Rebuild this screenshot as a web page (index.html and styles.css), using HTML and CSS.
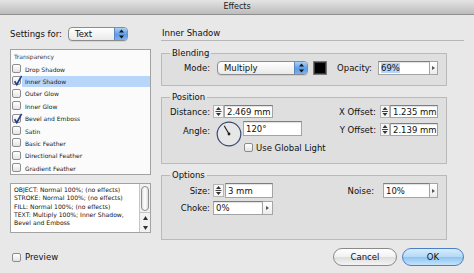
FILE: index.html
```html
<!DOCTYPE html>
<html lang="en">
<head>
	<meta charset="utf-8">
	<title>Effects</title>
	<link rel="stylesheet" href="styles.css">
</head>
<body>
<div class="dialog">
	<header class="titlebar">Effects</header>

	<div class="dialog__main">
		<aside class="sidebar">
			<div class="settings-for">
				<span class="settings-for__label">Settings for:</span>
				<div class="popup popup--target">
					<span class="popup__value">Text</span>
					<span class="popup__arrows"><svg width="7" height="10" viewBox="0 0 7 10"><path d="M3.5 0.5 6 3.6H1Z M3.5 9.5 6 6.4H1Z" fill="#111"/></svg></span>
				</div>
			</div>

			<ul class="effect-list">
				<li class="effect-list__group">Transparency</li>
				<li class="effect-list__item"><span class="check"></span><span class="effect-list__label">Drop Shadow</span></li>
				<li class="effect-list__item is-selected"><span class="check"><svg class="check__mark" width="9" height="9" viewBox="0 0 9 9"><path d="M1.6 4.2 3.8 7.6 8.6-1.2" fill="none" stroke="#1d3f8e" stroke-width="1.7"/></svg></span><span class="effect-list__label">Inner Shadow</span></li>
				<li class="effect-list__item"><span class="check"></span><span class="effect-list__label">Outer Glow</span></li>
				<li class="effect-list__item"><span class="check"></span><span class="effect-list__label">Inner Glow</span></li>
				<li class="effect-list__item"><span class="check"><svg class="check__mark" width="9" height="9" viewBox="0 0 9 9"><path d="M1.6 4.2 3.8 7.6 8.6-1.2" fill="none" stroke="#1d3f8e" stroke-width="1.7"/></svg></span><span class="effect-list__label">Bevel and Emboss</span></li>
				<li class="effect-list__item"><span class="check"></span><span class="effect-list__label">Satin</span></li>
				<li class="effect-list__item"><span class="check"></span><span class="effect-list__label">Basic Feather</span></li>
				<li class="effect-list__item"><span class="check"></span><span class="effect-list__label">Directional Feather</span></li>
				<li class="effect-list__item"><span class="check"></span><span class="effect-list__label">Gradient Feather</span></li>
			</ul>

			<div class="summary">
				<p class="summary__text">OBJECT: Normal 100%; (no effects)<br>STROKE: Normal 100%; (no effects)<br>FILL: Normal 100%; (no effects)<br>TEXT: Multiply 100%; Inner Shadow,<br>Bevel and Emboss</p>
				<div class="scrollbar">
					<div class="scrollbar__track"><span class="scrollbar__thumb"></span></div>
					<span class="scrollbar__arrow scrollbar__arrow--up"><svg width="5" height="4" viewBox="0 0 5 4"><path d="M2.5 0 5 4H0Z" fill="#333"/></svg></span>
					<span class="scrollbar__arrow"><svg width="5" height="4" viewBox="0 0 5 4"><path d="M2.5 4 5 0H0Z" fill="#333"/></svg></span>
				</div>
			</div>
		</aside>

		<section class="panel">
			<h1 class="panel__title">Inner Shadow</h1>

			<fieldset class="group group--blending">
				<legend>Blending</legend>
				<div class="row">
					<span class="label">Mode:</span>
					<div class="popup popup--mode">
						<span class="popup__value">Multiply</span>
						<span class="popup__arrows"><svg width="7" height="10" viewBox="0 0 7 10"><path d="M3.5 0.5 6 3.6H1Z M3.5 9.5 6 6.4H1Z" fill="#111"/></svg></span>
					</div>
					<span class="swatch"></span>
					<div class="row__end">
						<span class="label-inline">Opacity:</span>
						<span class="field field--opacity"><span class="field__selected">69%</span></span>
						<span class="nudge"><svg width="3" height="4" viewBox="0 0 3 4"><path d="M0 0 3 2 0 4Z" fill="#555"/></svg></span>
					</div>
				</div>
			</fieldset>

			<fieldset class="group group--position">
				<legend>Position</legend>
				<div class="columns">
					<div class="col">
						<div class="row row--short">
							<span class="label">Distance:</span>
							<span class="stepper"><svg width="11" height="13" viewBox="0 0 11 13"><rect x="0.5" y="0.5" width="10" height="12" fill="#f6f6f6" stroke="#b4b4b4"/><path d="M5.5 2 8 5H3Z M5.5 11 8 8H3Z" fill="#333"/><path d="M2.5 6.5H8.5" stroke="#444"/></svg></span>
							<span class="field field--dist">2.469 mm</span>
						</div>
						<div class="angle">
							<span class="label angle__label">Angle:</span>
							<svg class="dial" width="26" height="26" viewBox="0 0 26 26"><circle cx="13" cy="13" r="11.8" fill="rgba(255,255,255,.25)" stroke="#3a4a72" stroke-width="1.2"/><path d="M13 13 8.2 4.7" stroke="#1c1c1c" stroke-width="1.1"/><circle cx="13" cy="13" r="1.4" fill="#1c1c1c"/></svg>
							<div class="angle__fields">
								<span class="field field--angle">120°</span>
								<label class="check-row"><span class="check"></span>Use Global Light</label>
							</div>
						</div>
					</div>
					<div class="col col--right">
						<div class="row row--short">
							<span class="label-inline">X Offset:</span>
							<span class="stepper stepper--narrow"><svg width="10" height="13" viewBox="0 0 10 13"><rect x="0.5" y="0.5" width="9" height="12" fill="#f6f6f6" stroke="#b4b4b4"/><path d="M5 2 7.5 5h-5Z M5 11 7.5 8h-5Z" fill="#333"/><path d="M2 6.5H8" stroke="#444"/></svg></span>
							<span class="field field--offset">1.235 mm</span>
						</div>
						<div class="row row--short row--gap">
							<span class="label-inline">Y Offset:</span>
							<span class="stepper stepper--narrow"><svg width="10" height="13" viewBox="0 0 10 13"><rect x="0.5" y="0.5" width="9" height="12" fill="#f6f6f6" stroke="#b4b4b4"/><path d="M5 2 7.5 5h-5Z M5 11 7.5 8h-5Z" fill="#333"/><path d="M2 6.5H8" stroke="#444"/></svg></span>
							<span class="field field--offset">2.139 mm</span>
						</div>
					</div>
				</div>
			</fieldset>

			<fieldset class="group group--options">
				<legend>Options</legend>
				<div class="columns">
					<div class="col">
						<div class="row row--tall">
							<span class="label">Size:</span>
							<span class="stepper"><svg width="11" height="13" viewBox="0 0 11 13"><rect x="0.5" y="0.5" width="10" height="12" fill="#f6f6f6" stroke="#b4b4b4"/><path d="M5.5 2 8 5H3Z M5.5 11 8 8H3Z" fill="#333"/><path d="M2.5 6.5H8.5" stroke="#444"/></svg></span>
							<span class="field field--size">3 mm</span>
						</div>
						<div class="row row--gap3">
							<span class="label">Choke:</span>
							<span class="field field--choke">0%</span>
							<span class="nudge nudge--wide"><svg width="3" height="4" viewBox="0 0 3 4"><path d="M0 0 3 2 0 4Z" fill="#555"/></svg></span>
						</div>
					</div>
					<div class="col col--right">
						<div class="row row--tall">
							<span class="label-inline label-inline--noise">Noise:</span>
							<span class="field field--noise">10%</span>
							<span class="nudge"><svg width="3" height="4" viewBox="0 0 3 4"><path d="M0 0 3 2 0 4Z" fill="#555"/></svg></span>
						</div>
					</div>
				</div>
			</fieldset>
		</section>
	</div>

	<footer class="dialog__footer">
		<label class="check-row check-row--preview"><span class="check"></span>Preview</label>
		<div class="buttons">
			<button class="button">Cancel</button>
			<button class="button button--default">OK</button>
		</div>
	</footer>
</div>
</body>
</html>
```

FILE: styles.css
```css
/* PAGE */
* {
	box-sizing: border-box;
}
html,
body {
	margin: 0;
}
body {
	background: #e8e8e8;
	color: #111;
	font-family: 'DejaVu Sans', sans-serif;
	font-size: 8.5px;
	height: 273px;
	overflow: hidden;
	width: 474px;
}
.dialog {
	display: flex;
	flex-direction: column;
	height: 273px;
}
.titlebar {
	background: linear-gradient(#e4e4e4, #bcbcbc);
	border-bottom: 1px solid #8f8f8f;
	color: #222;
	font-size: 8px;
	height: 15px;
	line-height: 14px;
	text-align: center;
}
.dialog__main {
	column-gap: 10px;
	display: grid;
	grid-template-columns: 141px 303px;
	padding-inline: 10px;
}

/* SIDEBAR */
.settings-for {
	align-items: center;
	display: flex;
	height: 14px;
	margin-top: 12px;
}
.settings-for__label {
	width: 58px;
}

.popup {
	align-items: center;
	background: linear-gradient(#ffffff, #e9e9e9);
	border: 1px solid #8c8c8c;
	border-radius: 4px;
	box-shadow: 0 1px 0 rgba(0, 0, 0, .08);
	display: flex;
	height: 14px;
	overflow: hidden;
}
.popup__value {
	flex: 1;
	padding-left: 6px;
}
.popup__arrows {
	align-items: center;
	align-self: stretch;
	background: linear-gradient(#a9d0f6, #5d9be3 55%, #78b2ee);
	border-left: 1px solid #5b86c0;
	display: flex;
	justify-content: center;
	width: 13px;
}
.popup--target {
	width: 60px;
}
.popup--mode {
	margin-left: 7px;
	width: 91px;
}

.effect-list {
	background: #fbfbfb;
	border: 1px solid #a2a2a2;
	font-size: 6px;
	height: 126px;
	list-style: none;
	margin: 8px 0 0;
	padding: 0;

	li {
		align-items: center;
		display: flex;
		height: 12.4px;
	}
}
.effect-list__group {
	color: #3a3a3a;
	padding-left: 3px;
}
.effect-list__item {
	padding-left: 1px;
}
.effect-list__label {
	align-items: center;
	align-self: stretch;
	color: #222;
	display: flex;
	flex: 1;
	margin: 1px 0 0 1px;
	padding-left: 3px;
}
.effect-list__item.is-selected .effect-list__label {
	background: #b8d6fa;
}

.check {
	background: linear-gradient(#ffffff, #e4e4e4);
	border: 1px solid #8d8d8d;
	border-radius: 2px;
	display: grid;
	flex: none;
	height: 9px;
	place-items: center;
	width: 9px;
}
.check__mark {
	overflow: visible;
}

.summary {
	background: #fff;
	border: 1px solid #a2a2a2;
	display: flex;
	height: 50px;
	margin-top: 8px;
}
.summary__text {
	flex: 1;
	font-size: 6.1px;
	line-height: 8.3px;
	margin: 0;
	padding: 2px 2px 0 3px;
	white-space: nowrap;
}
.scrollbar {
	background: #f2f2f2;
	border-left: 1px solid #c4c4c4;
	display: flex;
	flex-direction: column;
	flex: none;
	width: 11px;
}
.scrollbar__track {
	flex: 1;
	padding: 2px 0 0;
}
.scrollbar__thumb {
	background: linear-gradient(90deg, #e0e0e0, #ffffff 50%, #dcdcdc);
	border: 1px solid #8d8d8d;
	border-radius: 5px;
	display: block;
	height: 25px;
	margin-inline: auto;
	width: 8px;
}
.scrollbar__arrow {
	align-items: center;
	display: flex;
	height: 9px;
	justify-content: center;
}
.scrollbar__arrow--up {
	border-top: 1px solid #c4c4c4;
	height: 11px;
}

/* PANEL */
.panel__title {
	border-bottom: 1px solid #b6b6b6;
	font-size: 8.5px;
	font-weight: normal;
	height: 14px;
	line-height: 13px;
	margin: 12px 0 0;
	padding-left: 1px;
}

.group {
	background: rgba(0, 0, 0, .035);
	border: 1px solid #bababa;
	margin: 5px 17px 0 0;
	min-width: 0;
	padding: 2px 8px 10px;

	legend {
		line-height: 12px;
		padding: 0 2px;
	}
}
.group--blending {
	margin-top: 6px;
}
.group--position {
	padding-bottom: 11px;
}
.group--options {
	padding-bottom: 24px;
}

.row {
	align-items: center;
	display: flex;
	height: 14px;
}
.row--short {
	height: 13px;
}
.row--tall {
	height: 15px;
}
.row--gap {
	margin-top: 5px;
}
.row--gap3 {
	margin-top: 3px;
}
.row__end {
	align-items: center;
	display: flex;
	margin-left: auto;
}

.label {
	flex: none;
	text-align: right;
	width: 40px;
}
.label-inline {
	margin-right: 4px;
}
.label-inline--noise {
	margin-right: 9px;
}
.row__end .label-inline {
	margin-right: 6px;
}

.swatch {
	background: #000;
	border: 1px solid #777;
	box-shadow: inset 0 0 0 1px #3a3a3a;
	height: 14px;
	margin-left: 5px;
	width: 14px;
}

.field {
	align-items: center;
	align-self: stretch;
	background: #fff;
	border: 1px solid #a4a4a4;
	border-top-color: #7d7d7d;
	box-shadow: inset 0 1px 1px rgba(0, 0, 0, .12);
	display: flex;
	padding-left: 2px;
}
.field__selected {
	background: #b5d4fb;
}
.field--opacity {
	height: 14px;
	width: 52px;
}
.field--dist {
	width: 49px;
}
.field--offset {
	width: 48px;
}
.field--angle {
	height: 15px;
	width: 59px;
}
.field--size {
	margin-left: 1px;
	width: 48px;
}
.field--choke {
	margin-left: 3px;
	width: 50px;
}
.field--noise {
	width: 47px;
}

.stepper {
	display: flex;
	margin-left: 3px;
}
.stepper--narrow {
	margin-left: 0;
}

.nudge {
	align-items: center;
	align-self: stretch;
	background: linear-gradient(#ffffff, #ececec);
	border: 1px solid #a4a4a4;
	border-left: 0;
	display: flex;
	justify-content: center;
	width: 8px;
}
.nudge--wide {
	width: 10px;
}

.columns {
	align-items: flex-start;
	display: flex;
	justify-content: space-between;
}
.col--right {
	align-items: flex-end;
	display: flex;
	flex-direction: column;
}

.angle {
	align-items: flex-start;
	display: flex;
	margin-top: 3px;
}
.angle__label {
	line-height: 13px;
	margin-top: 4px;
}
.dial {
	flex: none;
	margin-left: 6px;
}
.angle__fields {
	display: flex;
	flex-direction: column;
	margin-left: 1px;
}

.check-row {
	align-items: center;
	display: flex;
	gap: 3px;
	height: 9px;
	margin-top: 7px;
	padding-left: 1px;
}

/* FOOTER */
.dialog__footer {
	align-items: center;
	display: flex;
	padding: 8px 10px 0 12px;
}
.check-row--preview {
	gap: 4px;
	margin-top: 0;
	padding-left: 0;
}
.buttons {
	display: flex;
	gap: 5px;
	margin-left: auto;
}
.button {
	background: linear-gradient(#ffffff, #f1f1f1 50%, #dedede 51%, #f4f4f4);
	border: 1px solid #8a8a8a;
	border-radius: 9px;
	color: #111;
	font-family: inherit;
	font-size: 8.5px;
	height: 18px;
	padding: 0;
	width: 64px;
}
.button--default {
	background: linear-gradient(#d7ecfc, #b3d9f7 50%, #8fc4f0 51%, #c3e3fb);
	border-color: #4f7fc3;
	width: 62px;
}
```
